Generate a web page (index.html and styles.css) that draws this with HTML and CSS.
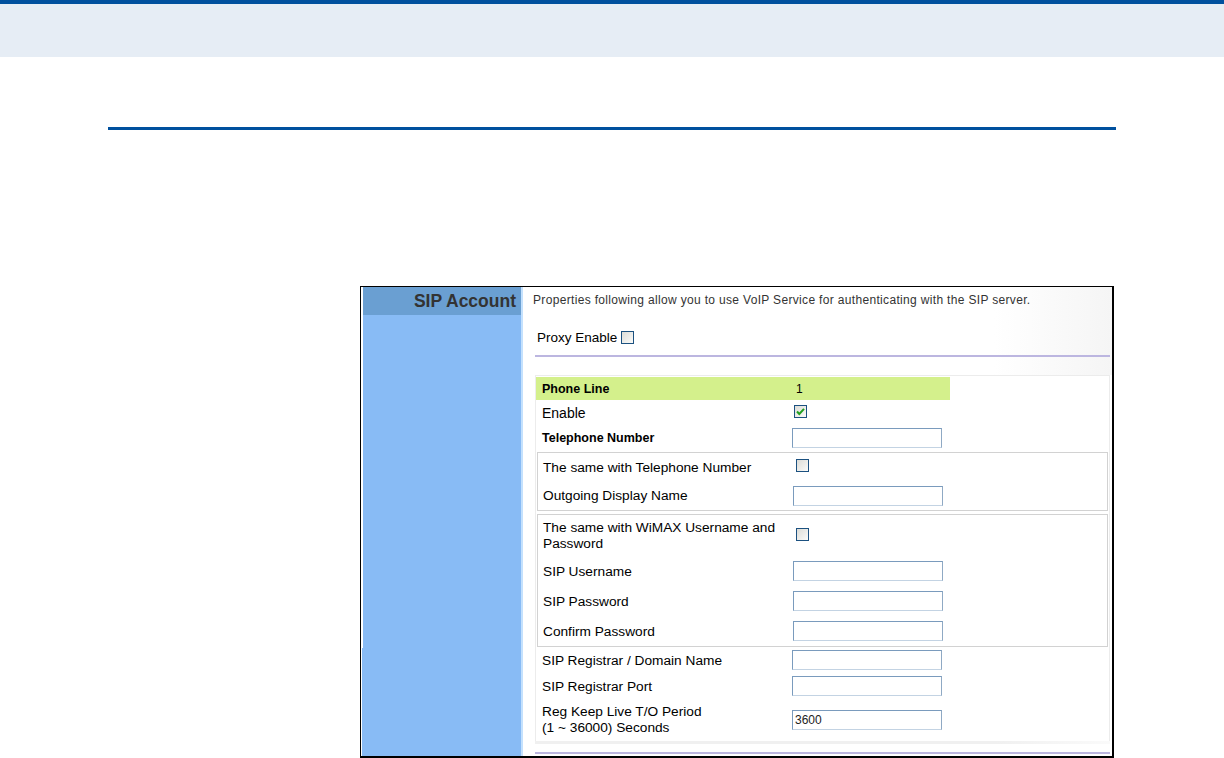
FILE: index.html
```html
<!DOCTYPE html>
<html lang="en">
<head>
<meta charset="utf-8">
<title>SIP Account</title>
<link rel="stylesheet" href="styles.css">
</head>
<body>
<div class="topbar"></div>
<div class="band"></div>
<div class="rule"></div>
<div class="frame">
  <aside class="sidebar">
    <div class="side-head">SIP Account</div>
  </aside>
  <main class="main">
    <div class="head">
      <div class="desc">Properties following allow you to use VoIP Service for authenticating with the SIP server.</div>
      <div class="proxy"><span>Proxy Enable</span><span class="cb"></span></div>
      <div class="pline"></div>
    </div>
    <div class="formbox">
      <div class="row r-phone"><div class="lbl b">Phone Line</div><div class="val num">1</div></div>
      <div class="row r-enable"><div class="lbl en">Enable</div><div class="val"><span class="cb cb-out checked"><svg viewBox="0 0 11 11" width="11" height="11"><path d="M2 5.5 L4.3 8 L9 2.8" fill="none" stroke="#22a020" stroke-width="2"/></svg></span></div></div>
      <div class="row r-tel"><div class="lbl b">Telephone Number</div><div class="val"><input class="inp" type="text"></div></div>
      <div class="box box1">
        <div class="row r28"><div class="lbl">The same with Telephone Number</div><div class="val"><span class="cb cb-in"></span></div></div>
        <div class="row r29"><div class="lbl">Outgoing Display Name</div><div class="val"><input class="inp" type="text"></div></div>
      </div>
      <div class="box box2">
        <div class="row r41"><div class="lbl two">The same with WiMAX Username and Password</div><div class="val"><span class="cb cb-in"></span></div></div>
        <div class="row r30"><div class="lbl">SIP Username</div><div class="val"><input class="inp" type="text"></div></div>
        <div class="row r30"><div class="lbl">SIP Password</div><div class="val"><input class="inp" type="password"></div></div>
        <div class="row r30"><div class="lbl">Confirm Password</div><div class="val"><input class="inp" type="password"></div></div>
      </div>
      <div class="row r26"><div class="lbl">SIP Registrar / Domain Name</div><div class="val"><input class="inp" type="text"></div></div>
      <div class="row r26"><div class="lbl">SIP Registrar Port</div><div class="val"><input class="inp" type="text"></div></div>
      <div class="row r42"><div class="lbl two">Reg Keep Live T/O Period<br>(1 ~ 36000) Seconds</div><div class="val"><input class="inp" type="text" value="3600"></div></div>
    </div>
    <div class="foot">
      <div class="foot-gray"></div>
      <div class="foot-line"></div>
    </div>
  </main>
</div>
</body>
</html>
```
FILE: styles.css
```css
* { box-sizing: border-box; }
body {
  margin: 0;
  background: #fff;
  font-family: "Liberation Sans", Arial, sans-serif;
  color: #000;
}
.topbar { height: 4px; background: #00509e; }
.band { height: 53px; background: #e6edf5; }
.rule {
  margin: 70px 0 0 108px;
  width: 1008px;
  height: 3px;
  background: #00509e;
}
.frame {
  margin: 156px 0 0 360px;
  width: 754px;
  height: 472px;
  border-style: solid;
  border-color: #000;
  border-width: 1px 2px 2px 1px;
  display: flex;
  background: #fff;
}
.sidebar {
  margin-left: 1px;
  width: 161px;
  flex: none;
  border-right: 2px solid #c4e1fd;
  background: linear-gradient(#fff, #fff) 0 0 / 1px 361px no-repeat, #88bbf5;
}
.side-head {
  margin-left: 1px;
  height: 28px;
  line-height: 28px;
  background: #6a9fd2;
  color: #333;
  font-weight: bold;
  font-size: 17.5px;
  text-align: right;
  padding-right: 5px;
}
.main {
  flex: 1;
  display: flex;
  flex-direction: column;
}
.head {
  height: 88px;
  background: linear-gradient(to right, #fff 80%, #f5f5f5);
}
.desc {
  height: 26px;
  line-height: 26px;
  padding-left: 10px;
  font-size: 12px;
  letter-spacing: 0.33px;
  color: #333;
  white-space: nowrap;
}
.proxy {
  margin-top: 12px;
  height: 24px;
  padding-left: 14px;
  display: flex;
  align-items: center;
  gap: 4px;
  font-size: 13.5px;
}
.pline {
  margin: 6px 2px 0 12px;
  height: 2px;
  background: #bcb6e0;
}
.cb {
  display: inline-flex;
  align-items: center;
  justify-content: center;
  width: 13px;
  height: 13px;
  border: 1px solid #1c5180;
  background: linear-gradient(135deg, #dcdcd7, #fbfbf9);
}
.formbox {
  margin: 0 2px 0 12px;
  height: 366px;
  border: 1px solid #ececec;
  border-bottom: none;
  padding-top: 1px;
}
.row {
  display: flex;
  align-items: center;
  padding-left: 6px;
  font-size: 13.7px;
}
.lbl { width: 250px; flex: none; padding-right: 8px; }
.lbl.b { font-weight: bold; font-size: 12.5px; }
.lbl.en { font-size: 14px; }
.lbl.two { line-height: 16px; }
.r-phone { height: 23px; width: 414px; background: #d4f08c; }
.num { font-size: 12px; padding-left: 4px; }
.r-enable { height: 25px; }
.r-tel { height: 26px; }
.cb-out { margin-left: 2px; }
.cb-in { margin-left: 3px; }
.box {
  margin: 0 1px 0 1px;
  border: 1px solid #d2d2d2;
}
.box .row { padding-left: 5px; }
.box1 { margin-top: 1px; height: 59px; }
.box2 { margin-top: 3px; height: 133px; }
.r26 { height: 26px; }
.r28 { height: 28px; }
.r29 { height: 29px; }
.r30 { height: 30px; }
.r41 { height: 41px; }
.r42 { height: 42px; }
.inp {
  display: block;
  width: 150px;
  height: 20px;
  margin: 0;
  padding: 0 2px;
  border: 1px solid;
  border-color: #7a9bbd #8fa9c4 #c3d3e3 #7a9bbd;
  background: #fff;
  font-family: "Liberation Sans", Arial, sans-serif;
  font-size: 12px;
  color: #222;
}
.foot {
  margin: 0 2px 0 12px;
  height: 15px;
}
.foot-gray {
  height: 3px;
  background: linear-gradient(to right, #f0f0f0 80%, #fafafa);
}
.foot-line {
  margin-top: 8px;
  height: 2px;
  background: #bcb6e0;
}
```
